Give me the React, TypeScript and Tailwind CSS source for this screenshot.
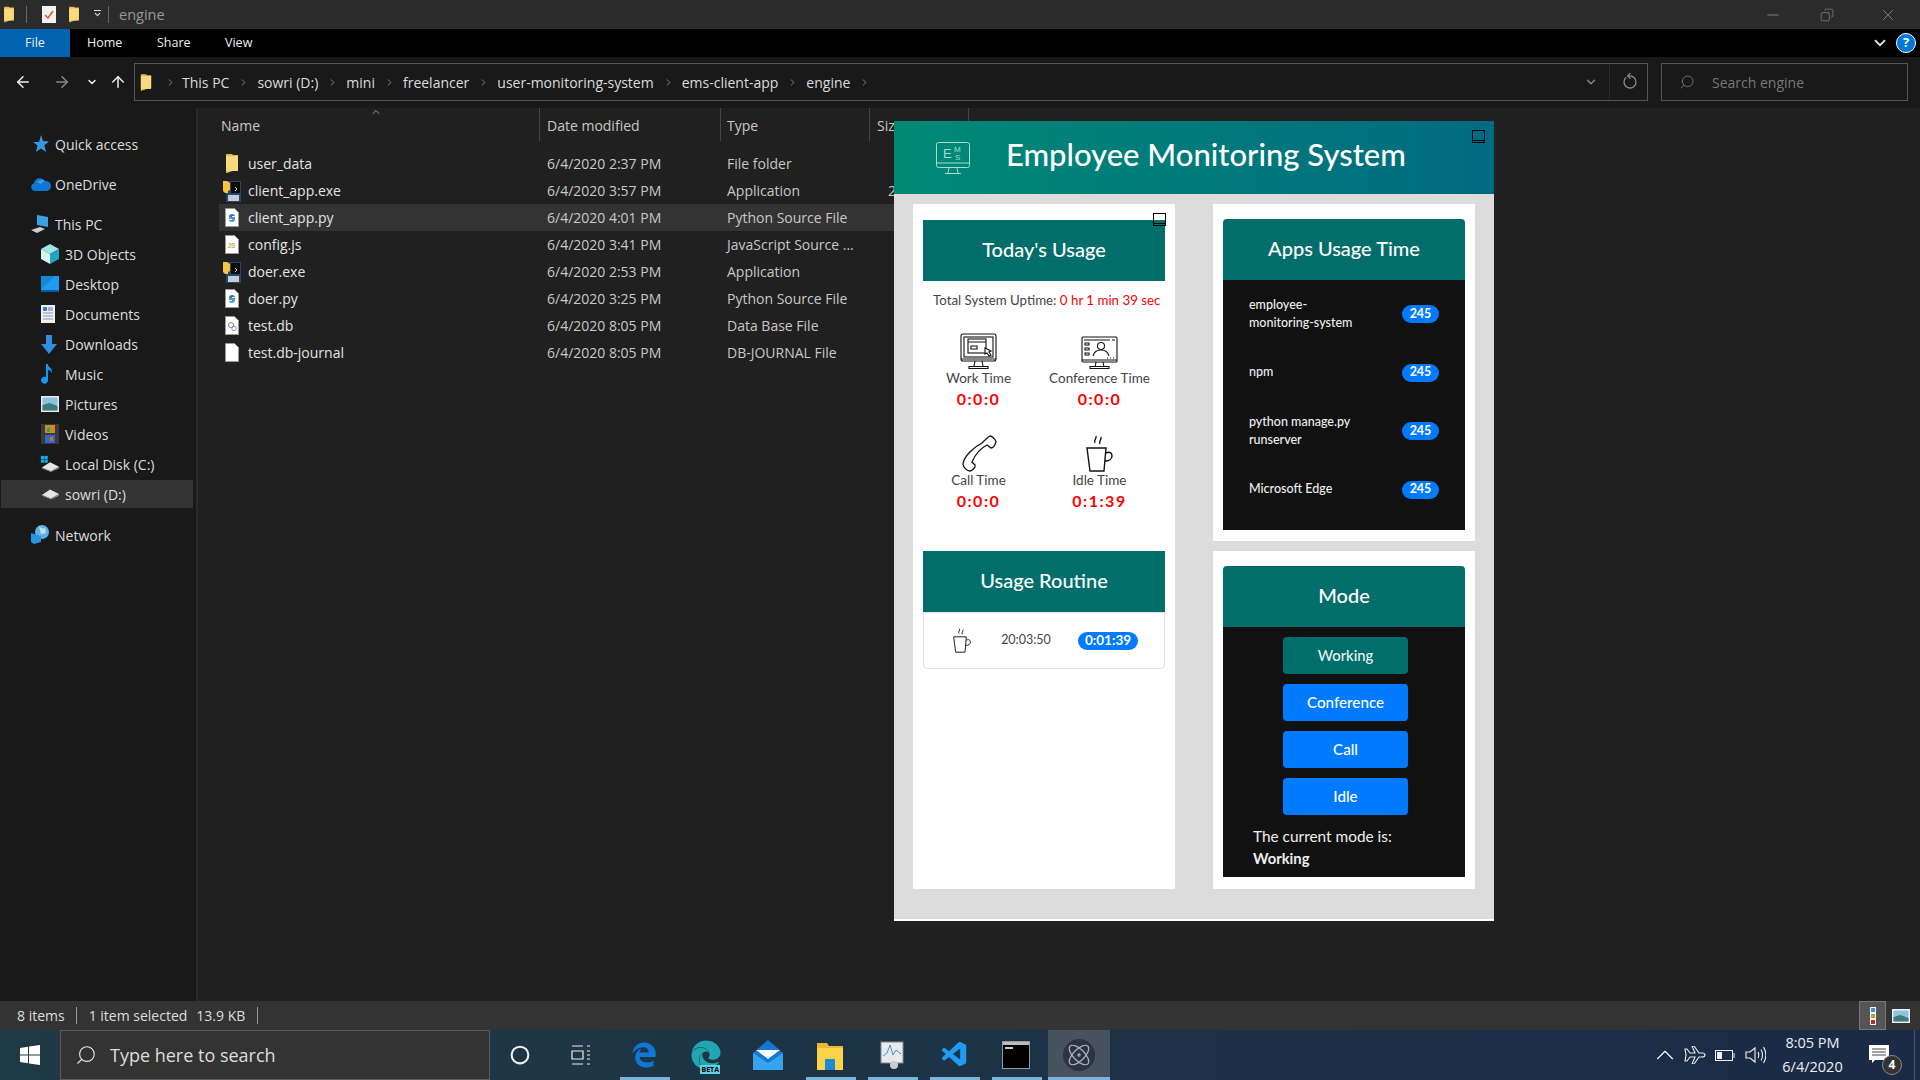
import {
	ArrowLeft,
	ArrowRight,
	ArrowUp,
	Atom,
	ChevronDown,
	ChevronRight,
	ChevronUp,
	Circle,
	Copy,
	Minus,
	RotateCw,
	Search,
	X,
} from "lucide-react";
import { FaEdge, FaEdgeLegacy } from "react-icons/fa";
import { VscVscode } from "react-icons/vsc";

// ---- explorer icons ----
function FolderIcon({ className = "h-[21px] w-[14px]" }: { className?: string }) {
	return (
		<svg viewBox="0 0 14 21" className={className}>
			<path d="M1 1h6l1 1h5v14l-11 4H1z" fill="#e5b94c" />
			<path d="M1 3h12v15H1z" fill="#f9d97f" />
		</svg>
	);
}

function PageIcon({ children }: { children?: React.ReactNode }) {
	return (
		<svg viewBox="0 0 14 19" className="h-[19px] w-[14px]">
			<path d="M.5.5h9l4 4v14H.5z" fill="#fff" stroke="#9a9a9a" />
			{children}
		</svg>
	);
}

function PyIcon() {
	return (
		<PageIcon>
			<path d="M4 9c0-2 1-3 3-3s3 1 3 2H7v1h3v2H6c-1 0-2-1-2-2z" fill="#3776ab" />
			<path d="M10 11c0 2-1 3-3 3s-3-1-3-2h3v-1H4V9h4c1 0 2 1 2 2z" fill="#4d9ccf" />
		</PageIcon>
	);
}

function JsIcon() {
	return (
		<PageIcon>
			<text x="2.5" y="13" fontSize="6.5" fontWeight="700" fill="#b9b53b" fontFamily="Liberation Sans, sans-serif">
				JS
			</text>
		</PageIcon>
	);
}

function DbIcon() {
	return (
		<PageIcon>
			<circle cx="6" cy="9" r="2.6" fill="none" stroke="#888" />
			<circle cx="9" cy="12.5" r="2.2" fill="none" stroke="#7a9ab8" />
		</PageIcon>
	);
}

function ExeIcon() {
	return (
		<svg viewBox="0 0 18 24" className="ml-[-2px] h-[24px] w-[18px]">
			<rect x="3" y="2" width="15" height="21" fill="#24466f" />
			<rect x="8" y="3" width="9" height="11" fill="#0d0d0d" />
			<path d="M12 8l2 2-2 2" fill="none" stroke="#ddd" />
			<path d="M0 2h4l3 2v7l-2 1v2H2l-2-2z" fill="#f5c542" />
			<rect x="5" y="16" width="11" height="6" fill="#c7ccd2" />
		</svg>
	);
}

// ---- sidebar icons ----
function SideIcon({ name }: { name: string }) {
	const box = "h-[18px] w-[18px]";
	switch (name) {
		case "star":
			return (
				<svg viewBox="0 0 18 18" className={box}>
					<path d="M10 0l2 6 6 .5-4.600 3.800L15 17l-5-3.600L5 17l1.500-6.500L2 7h6z" fill="#3a96dd" />
				</svg>
			);
		case "cloud":
			return (
				<svg viewBox="0 0 20 14" className="h-[14px] w-[20px]">
					<path d="M4 14a4 4 0 0 1-1-7.800A6 6 0 0 1 14 4a5 5 0 0 1 6 5 5 5 0 0 1-4 5z" fill="#0f78d4" />
					<path d="M6 5a6 6 0 0 1 8-1 5 5 0 0 0-4 3z" fill="#2ea6ea" />
				</svg>
			);
		case "pc":
			return (
				<svg viewBox="0 0 18 18" className={box}>
					<path d="M6 0l11 2v10L6 10z" fill="#3b9fe2" />
					<path d="M0 15l9-3 5 2-8 4z" fill="#c9ced4" />
				</svg>
			);
		case "cube":
			return (
				<svg viewBox="0 0 18 20" className="h-[20px] w-[18px]">
					<path d="M9 0l9 5-9 5-9-5z" fill="#9ce5e8" />
					<path d="M0 5l9 5v10l-9-5z" fill="#d4f4f4" />
					<path d="M18 5l-9 5v10l9-5z" fill="#20a5c4" />
				</svg>
			);
		case "desktop":
			return (
				<svg viewBox="0 0 18 16" className="h-[16px] w-[18px]">
					<rect width="18" height="16" fill="#1688d8" />
					<rect y="14" width="18" height="2" fill="#0b5a9c" />
					<path d="M0 14L14 0h4v14z" fill="#1e9bf0" />
				</svg>
			);
		case "docs":
			return (
				<svg viewBox="0 0 14 18" className="h-[18px] w-[14px]">
					<rect width="14" height="18" fill="#eef1f4" />
					<path d="M2 8h10M2 11h10M2 14h10" stroke="#8a97a3" />
					<path d="M7 3h5M7 5h5" stroke="#3a7fc1" strokeWidth="1.200" />
					<rect x="2" y="2" width="4" height="4" fill="#3a7fc1" />
				</svg>
			);
		case "down":
			return (
				<svg viewBox="0 0 16 19" className="h-[19px] w-[16px]">
					<path d="M5 0h6v9h5l-8 10-8-10h5z" fill="#2e8fe0" />
				</svg>
			);
		case "music":
			return (
				<svg viewBox="0 0 12 20" className="h-[20px] w-[12px]">
					<path d="M5 0h2c0 4 5 4 4 9-1-2-2-3-4-3v10a3.500 3.500 0 1 1-2-3z" fill="#0f9bec" />
				</svg>
			);
		case "pics":
			return (
				<svg viewBox="0 0 18 16" className="h-[16px] w-[18px]">
					<rect width="18" height="16" fill="#e8ecef" />
					<rect x="1.500" y="1.500" width="15" height="13" fill="#8fc3dd" />
					<path d="M1.500 9l7-2 8 3v4.500h-15z" fill="#3f7c79" />
				</svg>
			);
		case "videos":
			return (
				<svg viewBox="0 0 18 20" className="h-[20px] w-[18px]">
					<rect width="18" height="20" fill="#3a3a3a" />
					<rect x="4" y="1" width="10" height="8" fill="#c58b2d" />
					<rect x="4" y="11" width="10" height="8" fill="#2d69c5" />
					<rect x="6" y="4" width="3" height="4" fill="#3f9c4a" />
					<rect x="9" y="13" width="3" height="4" fill="#d86a2a" />
				</svg>
			);
		case "diskc":
			return (
				<svg viewBox="0 0 20 18" className={box}>
					<rect x="0" y="0" width="3.500" height="3.500" fill="#00b4f1" />
					<rect x="4" y="0" width="3.500" height="3.500" fill="#00b4f1" />
					<rect x="0" y="4" width="3.500" height="3.500" fill="#00b4f1" />
					<rect x="4" y="4" width="3.500" height="3.500" fill="#00b4f1" />
					<path d="M1 13l9-6 10 5-9 5z" fill="#e3e5e7" />
					<path d="M1 13l10 4 9-5v2l-9 4-10-4z" fill="#8d9195" />
				</svg>
			);
		case "diskd":
			return (
				<svg viewBox="0 0 20 12" className="h-[12px] w-[18px]">
					<path d="M1 7l9-6 10 5-9 5z" fill="#e3e5e7" />
					<path d="M1 7l10 4 9-5v2l-9 4-10-4z" fill="#8d9195" />
				</svg>
			);
		default:
			return (
				<svg viewBox="0 0 18 20" className="h-[20px] w-[18px]">
					<circle cx="11" cy="7" r="7" fill="#5bb4ea" />
					<path d="M8 1c2 2 4 3 6 2l1 5-5 1z" fill="#c7dce8" />
					<path d="M0 8l10 3v6l-7 2-3-2z" fill="#2a93dd" />
				</svg>
			);
	}
}

// ---- app line icons ----
function WorkIcon() {
	return (
		<svg viewBox="0 0 37 37" fill="none" stroke="#111" strokeWidth="1.100" className="h-[37px] w-[37px]">
			<rect x="1" y="1" width="35" height="27" rx="2" />
			<rect x="4" y="4" width="29" height="20" />
			<path d="M1 26h35M15 28l-1 5M22 28l1 5M9 35.500h19v-2H9z" />
			<rect x="8" y="6" width="18" height="14" />
			<path d="M8 9h18M11 13h6v3h-6z" />
			<path d="M25 15l6 3-2 1 2 3-2 1-2-3-2 1z" fill="#fff" />
		</svg>
	);
}

function ConferenceIcon() {
	return (
		<svg viewBox="0 0 37 37" fill="none" stroke="#111" strokeWidth="1.100" className="h-[37px] w-[37px]">
			<rect x="1" y="4" width="35" height="25" rx="1" />
			<path d="M3 7h26M31 7h3M1 27h35M15 29l-1 5M22 29l1 5M9 35.500h19v-2H9z" />
			<path d="M4 10h4v2H4zM4 15h4v2H4zM4 20h4v2H4z" />
			<circle cx="20" cy="13" r="3.500" />
			<path d="M12 23c1-4 4-6 8-6s7 2 8 6" />
			<path d="M26 25h1M29 25h1M32 25h1" />
		</svg>
	);
}

function PhoneIcon() {
	return (
		<svg viewBox="0 0 37 37" fill="none" stroke="#111" strokeWidth="1.300" className="h-[37px] w-[37px]">
			<path d="M22 8c3-3 6-6 8-7 2 0 6 4 6 6-1 3-3 6-5 6l-4-3C21 13 15 20 12 27l3 3c1 2-3 6-5 6-3 0-7-4-7-7 1-8 11-17 19-21z" />
		</svg>
	);
}

function CupIcon({ className = "h-[37px] w-[27px]" }: { className?: string }) {
	return (
		<svg viewBox="0 0 27 37" fill="none" stroke="#111" strokeWidth="1.400" className={className}>
			<path d="M9 8c-2-3 2-4 1-7M14 9c-2-3 2-4 1-7" />
			<path d="M1 13h19l-2 23H4z" />
			<path d="M20 18c4-2 6 0 6 3s-3 5-7 5" />
		</svg>
	);
}

function MinBox() {
	return (
		<div className="absolute flex h-[13px] w-[13px] items-end border border-black bg-transparent">
			<div className="mb-[1px] h-[1px] w-full bg-black" />
		</div>
	);
}

// ---- data ----
const SIDEBAR = [
	{ label: "Quick access", icon: "star", top: true, mt: "mt-0" },
	{ label: "OneDrive", icon: "cloud", top: true, mt: "mt-[10px]" },
	{ label: "This PC", icon: "pc", top: true, mt: "mt-[10px]" },
	{ label: "3D Objects", icon: "cube" },
	{ label: "Desktop", icon: "desktop" },
	{ label: "Documents", icon: "docs" },
	{ label: "Downloads", icon: "down" },
	{ label: "Music", icon: "music" },
	{ label: "Pictures", icon: "pics" },
	{ label: "Videos", icon: "videos" },
	{ label: "Local Disk (C:)", icon: "diskc" },
	{ label: "sowri (D:)", icon: "diskd", active: true, mt: "mt-[1px]" },
	{ label: "Network", icon: "net", top: true, mt: "mt-[12px]" },
];

const FILES = [
	{ name: "user_data", date: "6/4/2020 2:37 PM", type: "File folder", icon: <FolderIcon /> },
	{ name: "client_app.exe", date: "6/4/2020 3:57 PM", type: "Application", icon: <ExeIcon /> },
	{ name: "client_app.py", date: "6/4/2020 4:01 PM", type: "Python Source File", icon: <PyIcon />, selected: true },
	{ name: "config.js", date: "6/4/2020 3:41 PM", type: "JavaScript Source ...", icon: <JsIcon /> },
	{ name: "doer.exe", date: "6/4/2020 2:53 PM", type: "Application", icon: <ExeIcon /> },
	{ name: "doer.py", date: "6/4/2020 3:25 PM", type: "Python Source File", icon: <PyIcon /> },
	{ name: "test.db", date: "6/4/2020 8:05 PM", type: "Data Base File", icon: <DbIcon /> },
	{ name: "test.db-journal", date: "6/4/2020 8:05 PM", type: "DB-JOURNAL File", icon: <PageIcon /> },
];

const CRUMBS = ["This PC", "sowri (D:)", "mini", "freelancer", "user-monitoring-system", "ems-client-app", "engine"];

const STATS = [
	{ label: "Work Time", value: "0:0:0", icon: <WorkIcon /> },
	{ label: "Conference Time", value: "0:0:0", icon: <ConferenceIcon /> },
	{ label: "Call Time", value: "0:0:0", icon: <PhoneIcon /> },
	{ label: "Idle Time", value: "0:1:39", icon: <CupIcon /> },
];

const APPS = ["employee-\nmonitoring-system", "npm", "python manage.py\nrunserver", "Microsoft Edge"];

function AppWindow() {
	return (
		<div className="absolute top-[121px] left-[894px] flex h-[800px] w-[600px] flex-col border-b-2 border-white bg-[#dcdcdc] font-['Lato',sans-serif]">
			{/* header */}
			<div className="relative flex h-[73px] shrink-0 items-center bg-gradient-to-r from-[#008a75] to-[#006a80] pl-[42px]">
				<svg viewBox="0 0 34 32" fill="none" stroke="#a6dcd2" strokeWidth="1" className="h-[32px] w-[34px]">
					<rect x="0.500" y="0.500" width="33" height="25" rx="2" />
					<path d="M0.500 21h33M13 26l-1 5M21 26l1 5M9 31.500h16" />
					<text x="7" y="16" fontSize="13" fill="#a6dcd2" stroke="none" fontFamily="Liberation Sans, sans-serif">E</text>
					<text x="18" y="10" fontSize="8" fill="#a6dcd2" stroke="none" fontFamily="Liberation Sans, sans-serif">M</text>
					<text x="19" y="18" fontSize="8" fill="#a6dcd2" stroke="none" fontFamily="Liberation Sans, sans-serif">S</text>
				</svg>
				<div className="mb-[7px] ml-[36px] text-[31px] leading-none font-medium text-white">Employee Monitoring System</div>
				<div className="absolute top-[9px] right-[9px] h-[13px] w-[13px]">
					<MinBox />
				</div>
			</div>

			<div className="flex flex-1 gap-[38px] px-[19px] pt-[10px] pb-[30px]">
				{/* left card */}
				<div className="relative flex w-[262px] flex-col bg-white px-[10px] pt-[16px]">
					<div className="absolute top-[9px] right-[9px] h-[13px] w-[13px]">
						<MinBox />
					</div>
					<div className="flex h-[61px] items-center justify-center bg-[#026e6b] pb-[4px] text-[20px] font-medium text-white">Today's Usage</div>
					<div className="flex h-[40px] items-center pl-[10px] text-[13.300px] whitespace-nowrap text-[#444]">
						Total System Uptime:&nbsp;<span className="text-[#f00]">0 hr 1 min 39 sec</span>
					</div>
					<div className="mt-[12px] -ml-[5px] grid grid-cols-[121px_121px]">
						{STATS.map((s) => (
							<div key={s.label} className="flex h-[102px] flex-col items-center">
								<div className="flex h-[37px] items-center">{s.icon}</div>
								<div className="h-[16px] text-[13.500px] leading-[16px] text-[#444]">{s.label}</div>
								<div className="mt-[4px] text-[16px] leading-[18px] font-bold tracking-[1.500px] text-[#f00]">{s.value}</div>
							</div>
						))}
					</div>
					<div className="mt-[14px] flex h-[61px] items-center justify-center bg-[#026e6b] pb-[4px] text-[20px] font-medium text-white">Usage Routine</div>
					<div className="flex h-[57px] items-center rounded-b-[4px] border border-[#e0e0e0] pl-[29px]">
						<CupIcon className="h-[25px] w-[18px]" />
						<div className="ml-[25px] w-[60px] text-center text-[12.500px] text-[#444]">20:03:50</div>
						<div className="ml-[22px] flex h-[18px] w-[60px] items-center justify-center rounded-full bg-[#007bff] text-[13.500px] font-bold text-white">0:01:39</div>
					</div>
				</div>

				{/* right column */}
				<div className="flex w-[262px] flex-col gap-[10px]">
					<div className="bg-white px-[10px] pt-[15px] pb-[11px]">
						<div className="flex h-[61px] items-center justify-center rounded-t-[4px] bg-[#026e6b] pb-[4px] text-[20px] font-medium text-white">Apps Usage Time</div>
						<div className="h-[250px] bg-[#111] pt-[5px]">
							{APPS.map((a) => (
								<div key={a} className="flex h-[58.500px] items-center justify-between pr-[26px] pl-[26px]">
									<div className="mb-[1px] text-[12.500px] leading-[18px] font-medium whitespace-pre-line text-[#eee]">{a}</div>
									<div className="flex h-[18px] w-[37px] items-center justify-center rounded-full bg-[#007bff] text-[12.500px] font-bold text-white">245</div>
								</div>
							))}
						</div>
					</div>

					<div className="flex-1 bg-white px-[10px] pt-[15px] pb-[12px]">
						<div className="flex h-[61px] items-center justify-center rounded-t-[4px] bg-[#026e6b] pb-[4px] text-[20px] font-medium text-white">Mode</div>
						<div className="h-[250px] bg-[#111] pt-[10px]">
							<div className="ml-[60px] flex w-[125px] flex-col gap-[10px]">
								{["Working", "Conference", "Call", "Idle"].map((m, i) => (
									<div
										key={m}
										className={
											i === 0
												? "flex h-[37px] items-center justify-center rounded-[4px] bg-[#026e6b] text-[14.800px] font-medium text-[#e8f5f3]"
												: "flex h-[37px] items-center justify-center rounded-[4px] bg-[#007bff] text-[15.200px] font-medium text-white"
										}
									>
										{m}
									</div>
								))}
							</div>
							<div className="mt-[10px] pl-[30px] text-[15.400px] leading-[22px] text-[#eee]">
								The current mode is:
								<div className="text-[14.800px] font-bold">Working</div>
							</div>
						</div>
					</div>
				</div>
			</div>
		</div>
	);
}

function TaskIcon({ children, on, active }: { children: React.ReactNode; on?: boolean; active?: boolean }) {
	return (
		<div className={active ? "relative flex h-full w-[62px] items-center justify-center bg-[#46535e]" : "relative flex h-full w-[62px] items-center justify-center"}>
			{children}
			{on && <div className={active ? "absolute inset-x-0 bottom-0 h-[3px] bg-[#7ab4dc]" : "absolute inset-x-[6px] bottom-0 h-[3px] bg-[#7ab4dc]"} />}
		</div>
	);
}

export default function App() {
	return (
		<div className="relative flex h-[1080px] w-[1920px] flex-col overflow-hidden bg-[#202020] font-['Open_Sans',sans-serif] text-[14px] text-[#ddd]">
			{/* title bar */}
			<div className="flex h-[29px] shrink-0 items-center bg-[#2b2b2b] pl-[3px]">
				<FolderIcon className="h-[17px] w-[12px]" />
				<div className="ml-[11px] h-[17px] w-[1px] bg-[#666]" />
				<svg viewBox="0 0 14 17" className="ml-[15px] h-[17px] w-[14px]">
					<rect width="14" height="17" fill="#f2f2f2" />
					<path d="M3 9l3 3 5-7" fill="none" stroke="#e8562a" strokeWidth="1.600" />
				</svg>
				<FolderIcon className="ml-[12px] h-[17px] w-[12px]" />
				<div className="ml-[11px] flex w-[12px] flex-col items-center gap-[1px]">
					<div className="h-[1px] w-[7px] bg-[#ddd]" />
					<ChevronDown size={9} strokeWidth={3} className="mt-[-2px] text-[#ddd]" />
				</div>
				<div className="ml-[5px] h-[17px] w-[1px] bg-[#666]" />
				<div className="ml-[10px] text-[14.500px] text-[#999]">engine</div>
				<div className="ml-auto flex items-center pr-[23px] text-[#999]">
					<Minus size={18} strokeWidth={1} />
					<Copy size={14} strokeWidth={1} className="ml-[38px] -scale-x-100" />
					<X size={18} strokeWidth={1} className="ml-[45px]" />
				</div>
			</div>

			{/* ribbon tabs */}
			<div className="flex h-[28px] shrink-0 items-center bg-black text-[12.500px] text-[#eee]">
				<div className="flex h-full w-[70px] items-center justify-center bg-[#0063b1]">File</div>
				<div className="ml-[17px] w-[70px]">Home</div>
				<div className="w-[68px]">Share</div>
				<div>View</div>
				<ChevronDown size={18} strokeWidth={2.500} className="ml-auto text-[#ddd]" />
				<div className="mr-[4px] ml-[7px] flex h-[20px] w-[20px] items-center justify-center rounded-full border border-white bg-[#0078d7] text-[13px] font-bold text-white">?</div>
			</div>

			{/* address row */}
			<div className="flex h-[51px] shrink-0 items-start bg-[#191919] pt-[6px]">
				<div className="flex h-[38px] w-[134px] items-center text-[#eee]">
					<ArrowLeft size={18} className="ml-[14px]" />
					<ArrowRight size={18} className="ml-[21px] text-[#888]" />
					<ChevronDown size={12} strokeWidth={3} className="ml-[15px]" />
					<ArrowUp size={18} className="ml-[11px]" />
				</div>
				<div className="flex h-[38px] w-[1514px] items-center border border-[#555] text-[#ddd]">
					<FolderIcon className="ml-[5px] h-[19px] w-[12px]" />
					<ChevronRight size={11} className="ml-[13px] text-[#888]" />
					<div className="ml-[6px] flex items-center gap-[8px]">
						{CRUMBS.map((c) => (
							<div key={c} className="flex items-center gap-[9px]">
								<span>{c}</span>
								<ChevronRight size={11} className="text-[#888]" />
							</div>
						))}
					</div>
					<ChevronDown size={14} strokeWidth={2.500} className="mr-[11px] ml-auto text-[#888]" />
					<div className="h-full w-[1px] bg-[#2a2a2a]" />
					<RotateCw size={16} className="mr-[9px] ml-[12px] -scale-x-100 rotate-45 text-[#888]" />
				</div>
				<div className="ml-[13px] flex h-[38px] w-[247px] items-center border border-[#555] pl-[17px] text-[#777]">
					<Search size={16} strokeWidth={1.300} className="-scale-x-100" />
					<span className="ml-[17px]">Search engine</span>
				</div>
			</div>

			{/* content */}
			<div className="flex min-h-0 flex-1">
				<div className="w-[198px] shrink-0 border-r-2 border-[#2a2a2a] bg-[#191919] pt-[21px]">
					{SIDEBAR.map((s) => (
						<div
							key={s.label}
							className={
								(s.active ? "mr-[3px] ml-[1px] h-[28px] bg-[#333] " : "h-[30px] ") +
								"flex items-center " +
								(s.mt ?? "")
							}
						>
							<div className={s.top ? "ml-[31px] flex w-[24px] justify-start" : s.active ? "ml-[40px] flex w-[24px] justify-start" : "ml-[41px] flex w-[24px] justify-start"}>
								<SideIcon name={s.icon} />
							</div>
							<span className="whitespace-nowrap">{s.label}</span>
						</div>
					))}
				</div>

				<div className="min-w-0 flex-1">
					<div className="flex h-[33px] text-[#c8c8c8]">
						<div className="relative flex w-[342px] items-center border-r border-[#444] pt-[1px] pl-[23px]">
							Name
							<ChevronUp size={12} className="absolute top-[-2px] left-[172px] text-[#999]" />
						</div>
						<div className="flex w-[181px] items-center border-r border-[#444] pt-[1px] pl-[7px]">Date modified</div>
						<div className="flex w-[149px] items-center border-r border-[#444] pt-[1px] pl-[6px]">Type</div>
						<div className="flex w-[99px] items-center border-r border-[#444] pt-[1px] pl-[7px]">Size</div>
					</div>
					<div className="ml-[21px] w-[700px] pt-[9px]">
						{FILES.map((f) => (
							<div key={f.name} className={f.selected ? "flex h-[27px] items-center bg-[#333] pl-[6px]" : "flex h-[27px] items-center pl-[6px]"}>
								<div className="flex w-[23px] shrink-0 items-center">{f.icon}</div>
								<div className="w-[299px] shrink-0 text-[#e4e4e4]">{f.name}</div>
								<div className="w-[180px] shrink-0 text-[#c8c8c8]">{f.date}</div>
								<div className="w-[150px] shrink-0 whitespace-nowrap text-[#c8c8c8]">{f.type}</div>
								{f.name === "client_app.exe" && <div className="ml-[11px] text-[#c8c8c8]">2</div>}
							</div>
						))}
					</div>
				</div>
			</div>

			{/* status bar */}
			<div className="flex h-[29px] shrink-0 items-center bg-[#333] pl-[17px] text-[14px] text-[#ddd]">
				<span>8 items</span>
				<div className="ml-[11px] h-[17px] w-[1px] bg-[#999]" />
				<span className="ml-[12px]">1 item selected</span>
				<span className="ml-[9px]">13.9 KB</span>
				<div className="ml-[12px] h-[17px] w-[1px] bg-[#999]" />
				<div className="mr-[10px] ml-auto flex items-center">
					<div className="flex h-[29px] w-[27px] flex-col items-center justify-center gap-[2px] border border-[#777] bg-[#555]">
						<div className="h-[4px] w-[4px] bg-[#3f8fd0] outline outline-1 outline-white" />
						<div className="h-[4px] w-[4px] bg-[#c0a030] outline outline-1 outline-white" />
						<div className="h-[4px] w-[4px] bg-[#b03020] outline outline-1 outline-white" />
					</div>
					<svg viewBox="0 0 18 14" className="ml-[6px] h-[14px] w-[18px]">
						<rect width="18" height="14" fill="#eef" />
						<rect x="1.500" y="1.500" width="15" height="11" fill="#8fc3dd" />
						<path d="M1.500 8l7-2 8 3v3.500h-15z" fill="#3f7c79" />
					</svg>
				</div>
			</div>

			{/* taskbar */}
			<div className="flex h-[50px] shrink-0 items-center bg-gradient-to-r from-[#1f3a44] to-[#1a2a47] text-white">
				<div className="flex h-full w-[60px] items-center justify-center">
					<svg viewBox="0 0 20 20" className="h-[20px] w-[20px]" fill="#fff">
						<path d="M0 3l8-1.200v7.700H0zM9 1.600L20 0v9.500H9zM0 10.500h8v7.700L0 17zM9 10.500h11V20L9 18.400z" />
					</svg>
				</div>
				<div className="flex h-full w-[430px] items-center border border-[#5a5a5a] bg-[#333] pl-[14px]">
					<Search size={22} strokeWidth={1.200} className="-scale-x-100 text-[#eee]" />
					<span className="ml-[13px] text-[18px] text-[#ddd]">Type here to search</span>
				</div>
				<TaskIcon>
					<Circle size={20} strokeWidth={2.500} className="-ml-[2px] text-[#eee]" />
				</TaskIcon>
				<TaskIcon>
					<svg viewBox="0 0 20 20" fill="none" stroke="#eee" strokeWidth="1.200" className="-ml-[5px] h-[20px] w-[20px]">
						<path d="M1 1h11M1 19h11M1 6h11v8H1zM16 1h3M16 6h3M16 10h3M16 14h3M16 19h3" />
					</svg>
				</TaskIcon>
				<TaskIcon on>
					<FaEdgeLegacy size={26} className="-ml-[2px] text-[#0f78d4]" />
				</TaskIcon>
				<TaskIcon>
					<div className="relative -ml-[2px]">
						<FaEdge size={30} className="text-[#22a6b0]" />
						<div className="absolute right-[1px] bottom-[-4px] bg-[#5fd0e6] px-[1px] text-[7px] leading-[9px] font-bold text-black">BETA</div>
					</div>
				</TaskIcon>
				<TaskIcon>
					<svg viewBox="0 0 30 30" className="-ml-[2px] h-[30px] w-[30px]">
						<path d="M15 0l15 13v17H0V13z" fill="#0f78d4" />
						<path d="M3 10h24l-12 9z" fill="#fff" />
						<path d="M0 13l15 10 15-10v17H0z" fill="#36a3ef" />
					</svg>
				</TaskIcon>
				<TaskIcon on>
					<svg viewBox="0 0 28 30" className="-ml-[2px] h-[30px] w-[28px]">
						<path d="M1 3h10l2 3h14v24H1z" fill="#f2b632" />
						<rect x="1" y="8" width="26" height="22" fill="#fbd34a" />
						<rect x="9" y="19" width="10" height="11" fill="#1e8ad6" />
					</svg>
				</TaskIcon>
				<TaskIcon on>
					<svg viewBox="0 0 28 30" className="-ml-[4px] h-[30px] w-[28px]">
						<rect x="4" y="2" width="22" height="21" fill="#e8ebee" stroke="#888" />
						<path d="M6 16l4-3 3-8 3 10 3-5 5 4" fill="none" stroke="#4d8fc0" />
						<circle cx="17" cy="25" r="4" fill="#ccc" />
					</svg>
				</TaskIcon>
				<TaskIcon on>
					<VscVscode size={30} className="text-[#1f9cf0]" />
				</TaskIcon>
				<TaskIcon on>
					<div className="-ml-[2px] h-[28px] w-[28px] border border-[#999] bg-black">
						<div className="h-[3px] bg-[#bbb]" />
						<div className="mt-[2px] ml-[2px] h-[2px] w-[8px] bg-[#ccc]" />
					</div>
				</TaskIcon>
				<TaskIcon on active>
					<div className="flex h-[32px] w-[32px] items-center justify-center rounded-full bg-[#2f3242]">
						<Atom size={26} strokeWidth={1.100} className="text-[#a5b8c2]" />
					</div>
				</TaskIcon>

				{/* tray */}
				<div className="ml-auto flex h-full items-center">
					<div className="flex w-[30px] justify-center">
						<ChevronUp size={30} strokeWidth={0.900} />
					</div>
					<div className="flex w-[30px] justify-center">
						<svg viewBox="0 0 22 18" fill="none" stroke="#eee" strokeWidth="1.100" className="h-[18px] w-[22px]">
							<path d="M1 3l2 0 3 4h5l-3-7h2l5 7h3c2 0 3 1 3 2s-1 2-3 2h-3l-5 7h-2l3-7H6l-3 4H1l1-6z" />
						</svg>
					</div>
					<div className="flex w-[30px] justify-center">
						<svg viewBox="0 0 20 11" className="h-[11px] w-[20px]" fill="none" stroke="#eee">
							<rect x="0.500" y="0.500" width="17" height="10" />
							<rect x="2" y="2" width="5" height="7" fill="#eee" stroke="none" />
							<path d="M19 3v5" />
						</svg>
					</div>
					<div className="flex w-[30px] justify-center">
						<svg viewBox="0 0 21 18" fill="none" stroke="#eee" strokeWidth="1.100" className="h-[18px] w-[21px]">
							<path d="M1 6h4l5-4v14l-5-4H1z" />
							<path d="M13 6c1 2 1 4 0 6M16 3.500c2 3 2 8 0 11M18.500 1c3 5 3 11 0 16" />
						</svg>
					</div>
					<div className="w-[85px] text-center text-[14.500px] leading-[24px] text-[#eee]">
						<div>8:05 PM</div>
						<div>6/4/2020</div>
					</div>
					<div className="relative flex w-[50px] justify-center">
						<svg viewBox="0 0 20 20" className="ml-[-2px] h-[20px] w-[20px]" fill="#fff">
							<path d="M0 0h20v15H6l-3 3v-3H0z" />
							<path d="M3 4h14M3 7h14M3 10h14" stroke="#444" />
						</svg>
						<div className="absolute top-[10px] left-[27px] flex h-[20px] w-[20px] items-center justify-center rounded-full border border-[#888] bg-[#333] text-[12px] font-bold">4</div>
					</div>
					<div className="ml-[9px] h-full w-[1px] bg-[#555]" />
					<div className="w-[5px]" />
				</div>
			</div>

			<AppWindow />
		</div>
	);
}
